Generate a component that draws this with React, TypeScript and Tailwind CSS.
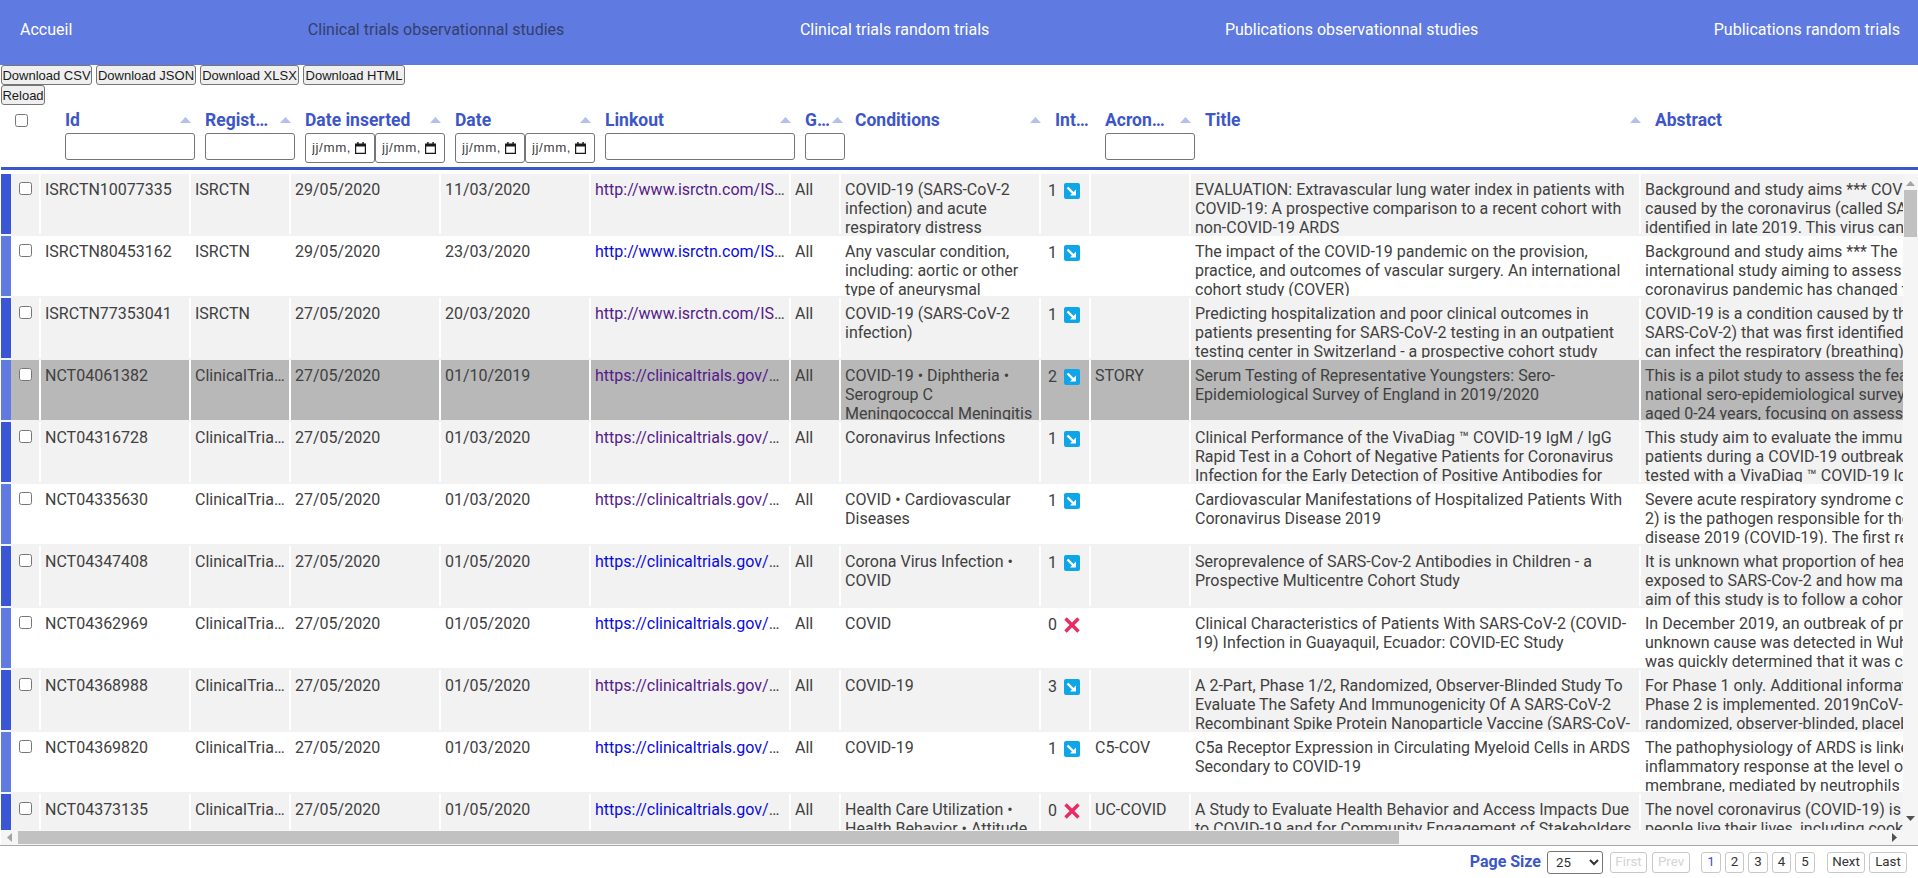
import React from "react";

type Row = {
  id: string; reg: string; ins: string; date: string; link: string; visited: boolean;
  cond: string; n: number; acr: string; title: string; abs: string[];
};

const CT = "ClinicalTrials.gov";
const rows: Row[] = [
  { id: "ISRCTN10077335", reg: "ISRCTN", ins: "29/05/2020", date: "11/03/2020", link: "http://www.isrctn.com/ISRCTN10077335", visited: true, cond: "COVID-19 (SARS-CoV-2 infection) and acute respiratory distress syndrome", n: 1, acr: "", title: "EVALUATION: Extravascular lung water index in patients with COVID-19: A prospective comparison to a recent cohort with non-COVID-19 ARDS", abs: ["Background and study aims *** COVID-19 is a", "caused by the coronavirus (called SARS-CoV-2)", "identified in late 2019. This virus can infect"] },
  { id: "ISRCTN80453162", reg: "ISRCTN", ins: "29/05/2020", date: "23/03/2020", link: "http://www.isrctn.com/ISRCTN80453162", visited: false, cond: "Any vascular condition, including: aortic or other type of aneurysmal disease", n: 1, acr: "", title: "The impact of the COVID-19 pandemic on the provision, practice, and outcomes of vascular surgery. An international cohort study (COVER)", abs: ["Background and study aims *** The", "international study aiming to assess how the", "coronavirus pandemic has changed the"] },
  { id: "ISRCTN77353041", reg: "ISRCTN", ins: "27/05/2020", date: "20/03/2020", link: "http://www.isrctn.com/ISRCTN77353041", visited: true, cond: "COVID-19 (SARS-CoV-2 infection)", n: 1, acr: "", title: "Predicting hospitalization and poor clinical outcomes in patients presenting for SARS-CoV-2 testing in an outpatient testing center in Switzerland - a prospective cohort study", abs: ["COVID-19 is a condition caused by the", "SARS-CoV-2) that was first identified", "can infect the respiratory (breathing) system"] },
  { id: "NCT04061382", reg: CT, ins: "27/05/2020", date: "01/10/2019", link: "https://clinicaltrials.gov/show/NCT04061382", visited: true, cond: "COVID-19 • Diphtheria • Serogroup C Meningococcal Meningitis", n: 2, acr: "STORY", title: "Serum Testing of Representative Youngsters: Sero-Epidemiological Survey of England in 2019/2020", abs: ["This is a pilot study to assess the feasibility", "national sero-epidemiological survey", "aged 0-24 years, focusing on assessing"] },
  { id: "NCT04316728", reg: CT, ins: "27/05/2020", date: "01/03/2020", link: "https://clinicaltrials.gov/show/NCT04316728", visited: true, cond: "Coronavirus Infections", n: 1, acr: "", title: "Clinical Performance of the VivaDiag ™ COVID-19 IgM / IgG Rapid Test in a Cohort of Negative Patients for Coronavirus Infection for the Early Detection of Positive Antibodies for COVID-19", abs: ["This study aim to evaluate the immunity", "patients during a COVID-19 outbreak", "tested with a VivaDiag ™ COVID-19 IgM"] },
  { id: "NCT04335630", reg: CT, ins: "27/05/2020", date: "01/03/2020", link: "https://clinicaltrials.gov/show/NCT04335630", visited: true, cond: "COVID • Cardiovascular Diseases", n: 1, acr: "", title: "Cardiovascular Manifestations of Hospitalized Patients With Coronavirus Disease 2019", abs: ["Severe acute respiratory syndrome coronavirus", "2) is the pathogen responsible for the", "disease 2019 (COVID-19). The first reports"] },
  { id: "NCT04347408", reg: CT, ins: "27/05/2020", date: "01/05/2020", link: "https://clinicaltrials.gov/show/NCT04347408", visited: false, cond: "Corona Virus Infection • COVID", n: 1, acr: "", title: "Seroprevalence of SARS-Cov-2 Antibodies in Children - a Prospective Multicentre Cohort Study", abs: ["It is unknown what proportion of healthy", "exposed to SARS-Cov-2 and how many", "aim of this study is to follow a cohort"] },
  { id: "NCT04362969", reg: CT, ins: "27/05/2020", date: "01/05/2020", link: "https://clinicaltrials.gov/show/NCT04362969", visited: false, cond: "COVID", n: 0, acr: "", title: "Clinical Characteristics of Patients With SARS-CoV-2 (COVID-19) Infection in Guayaquil, Ecuador: COVID-EC Study", abs: ["In December 2019, an outbreak of pneumonia", "unknown cause was detected in Wuhan", "was quickly determined that it was caused"] },
  { id: "NCT04368988", reg: CT, ins: "27/05/2020", date: "01/05/2020", link: "https://clinicaltrials.gov/show/NCT04368988", visited: true, cond: "COVID-19", n: 3, acr: "", title: "A 2-Part, Phase 1/2, Randomized, Observer-Blinded Study To Evaluate The Safety And Immunogenicity Of A SARS-CoV-2 Recombinant Spike Protein Nanoparticle Vaccine (SARS-CoV-2 rS) With or Without MatrixM Adjuvant", abs: ["For Phase 1 only. Additional information", "Phase 2 is implemented. 2019nCoV-", "randomized, observer-blinded, placebo"] },
  { id: "NCT04369820", reg: CT, ins: "27/05/2020", date: "01/03/2020", link: "https://clinicaltrials.gov/show/NCT04369820", visited: false, cond: "COVID-19", n: 1, acr: "C5-COV", title: "C5a Receptor Expression in Circulating Myeloid Cells in ARDS Secondary to COVID-19", abs: ["The pathophysiology of ARDS is linked", "inflammatory response at the level of", "membrane, mediated by neutrophils and"] },
  { id: "NCT04373135", reg: CT, ins: "27/05/2020", date: "01/05/2020", link: "https://clinicaltrials.gov/show/NCT04373135", visited: false, cond: "Health Care Utilization • Health Behavior • Attitude", n: 0, acr: "UC-COVID", title: "A Study to Evaluate Health Behavior and Access Impacts Due to COVID-19 and for Community Engagement of Stakeholders", abs: ["The novel coronavirus (COVID-19) is", "people live their lives, including cooking", "and working"] },
];

function SortUp() {
  return (
    <svg width="11" height="6" viewBox="0 0 11 6" className="shrink-0">
      <path d="M5.5 0 L11 6 L0 6 Z" fill="#b3bfec" />
    </svg>
  );
}

function Trend() {
  return (
    <svg width="16" height="16" viewBox="0 0 16 16" className="shrink-0">
      <rect width="16" height="16" rx="2" fill="#0fa5e9" />
      <path d="M3.5 4.5 L9.5 10.5" stroke="#fff" strokeWidth="2.4" />
      <path d="M12 6.5 L12 12.5 L6 12.5 Z" fill="#fff" />
    </svg>
  );
}

function Cross() {
  return (
    <svg width="16" height="16" viewBox="0 0 16 16" className="shrink-0">
      <path d="M1.5 1.5 L14.5 14.5 M14.5 1.5 L1.5 14.5" stroke="#ea2a62" strokeWidth="3.4" />
    </svg>
  );
}

function Calendar() {
  return (
    <svg width="11" height="12" viewBox="0 0 11 12" className="shrink-0">
      <path d="M0 1.5 H11 V12 H0 Z M1.2 4.5 V10.8 H9.8 V4.5 Z" fill="#1a1a1a" fillRule="evenodd" />
      <rect x="2.2" y="0" width="1.4" height="2" fill="#1a1a1a" />
      <rect x="7.4" y="0" width="1.4" height="2" fill="#1a1a1a" />
    </svg>
  );
}

function DateBox() {
  return (
    <div className="flex h-[30px] w-[70px] shrink-0 items-center justify-between rounded-[3px] border border-[#767676] bg-white pl-[6px] pr-[8px] text-[13.33px] tracking-[0.6px] text-[#3f3f3f] [font-family:Liberation_Sans,Arial,sans-serif]">
      <span className="overflow-hidden whitespace-nowrap">jj/mm,</span>
      <Calendar />
    </div>
  );
}

function TextBox({ cls }: { cls: string }) {
  return <input type="text" className={"h-[27px] rounded-[3px] border border-[#767676] bg-white " + cls} />;
}

function HeadCell({ label, cls, arrow = true, children }: { label: string; cls: string; arrow?: boolean; children?: React.ReactNode }) {
  return (
    <div className={"shrink-0 pl-[5px] pr-[9px] " + cls}>
      <div className="flex h-[28px] items-center justify-between gap-[2px] pt-[2px]">
        <span className="whitespace-nowrap text-[17.5px] font-bold leading-[19px] text-[#3c55c8]">{label}</span>
        {arrow && <SortUp />}
      </div>
      {children}
    </div>
  );
}

function Btn({ children, cls = "", muted = false }: { children: React.ReactNode; cls?: string; muted?: boolean }) {
  return (
    <button className={"flex h-[21px] items-center justify-center rounded-[3px] border border-[#c8c8c8] bg-white text-[13.33px] " + (muted ? "text-[#d4d4d4] " : "text-[#333] ") + cls}>
      {children}
    </button>
  );
}

function TopBtn({ children, cls }: { children: React.ReactNode; cls: string }) {
  return (
    <button className={"flex h-[20px] items-center justify-center whitespace-nowrap rounded-[3px] border border-[#767676] bg-[#efefef] pt-px text-[13px] text-[#1a1a1a] [font-family:Liberation_Sans,Arial,sans-serif] " + cls}>
      {children}
    </button>
  );
}

function DataRow({ r, i }: { r: Row; i: number }) {
  const odd = i % 2 === 0;
  const selected = i === 3;
  const bg = selected ? "bg-[#b8b8b8]" : odd ? "bg-[#f2f2f2]" : "bg-white";
  const cell = "h-[60px] shrink-0 overflow-hidden border-r-2 border-white px-[4px] pt-[6px] leading-[19px] " + bg;
  return (
    <div className={"mb-[2px] flex h-[60px] w-max " + (odd ? "shadow-[0_-2px_0_#f2f2f2,0_2px_0_#f2f2f2]" : "")}>
      <div className={"h-[60px] w-[10px] shrink-0 " + (odd ? "bg-[#3a56d4]" : "bg-[#5f7ae0]")} />
      <div className={"h-[60px] w-[30px] shrink-0 border-r-2 border-white pl-[8px] pt-[8px] " + bg}>
        <input type="checkbox" className="block h-[13px] w-[13px]" />
      </div>
      <div className={cell + " w-[150px]"}>{r.id}</div>
      <div className={cell + " w-[100px] truncate"}>{r.reg}</div>
      <div className={cell + " w-[150px]"}>{r.ins}</div>
      <div className={cell + " w-[150px]"}>{r.date}</div>
      <div className={cell + " w-[200px] truncate"}>
        <a href="#" className={r.visited ? "text-[#551a8b]" : "text-[#0a0ae0]"}>{r.link}</a>
      </div>
      <div className={cell + " w-[50px]"}>All</div>
      <div className={cell + " w-[200px]"}>{r.cond}</div>
      <div className={"h-[60px] w-[50px] shrink-0 border-r-2 border-white pl-[7px] pt-[9px] " + bg}>
        <div className="flex h-[16px] items-center gap-[7px] leading-[16px]">
          <span className="w-[9px]">{r.n}</span>
          {r.n > 0 ? <Trend /> : <Cross />}
        </div>
      </div>
      <div className={cell + " w-[100px]"}>{r.acr}</div>
      <div className={cell + " w-[450px]"}>{r.title}</div>
      <div className={cell + " w-[500px] whitespace-nowrap"}>
        {r.abs.map((l) => (
          <div key={l}>{l}</div>
        ))}
      </div>
    </div>
  );
}

export default function App() {
  return (
    <div className="flex h-[878px] w-[1918px] flex-col overflow-hidden bg-white text-[16px] text-[#404040] [font-family:Roboto,sans-serif]">
      <nav className="flex h-[65px] shrink-0 items-center justify-between bg-[#5f7ae0] pb-[5px] pl-[20px] pr-[18px] text-white">
        <a>Accueil</a>
        <a className="text-[#333f6e]">Clinical trials observationnal studies</a>
        <a>Clinical trials random trials</a>
        <a>Publications observationnal studies</a>
        <a>Publications random trials</a>
      </nav>

      <div className="flex h-[20px] shrink-0 gap-[4px] pl-px">
        <TopBtn cls="w-[91px]">Download CSV</TopBtn>
        <TopBtn cls="w-[100px]">Download JSON</TopBtn>
        <TopBtn cls="w-[99px]">Download XLSX</TopBtn>
        <TopBtn cls="w-[102px]">Download HTML</TopBtn>
      </div>
      <div className="flex h-[20px] shrink-0 pl-px">
        <TopBtn cls="w-[44px]">Reload</TopBtn>
      </div>

      <div className="flex h-[62px] shrink-0 overflow-hidden">
        <div className="w-[60px] shrink-0 pl-[15px] pt-[9px]">
          <input type="checkbox" className="block h-[13px] w-[13px]" />
        </div>
        <HeadCell label="Id" cls="w-[140px]"><TextBox cls="w-[130px]" /></HeadCell>
        <HeadCell label="Regist…" cls="w-[100px]"><TextBox cls="w-[90px]" /></HeadCell>
        <HeadCell label="Date inserted" cls="w-[150px]">
          <div className="flex"><DateBox /><DateBox /></div>
        </HeadCell>
        <HeadCell label="Date" cls="w-[150px]">
          <div className="flex"><DateBox /><DateBox /></div>
        </HeadCell>
        <HeadCell label="Linkout" cls="w-[200px]"><TextBox cls="w-[190px]" /></HeadCell>
        <HeadCell label="G…" cls="w-[50px]"><TextBox cls="w-[40px]" /></HeadCell>
        <HeadCell label="Conditions" cls="w-[200px]" />
        <HeadCell label="Int…" cls="w-[50px]" arrow={false} />
        <HeadCell label="Acron…" cls="w-[100px]"><TextBox cls="w-[90px]" /></HeadCell>
        <HeadCell label="Title" cls="w-[450px]" />
        <HeadCell label="Abstract" cls="w-[268px]" arrow={false} />
      </div>

      <div className="ml-px h-[3px] shrink-0 bg-[#3b57c8]" />

      <div className="mt-[4px] flex h-[656px] shrink-0">
        <div className="ml-px w-[1902px] shrink-0 overflow-hidden">
          {rows.map((r, i) => (
            <DataRow key={r.id} r={r} i={i} />
          ))}
        </div>
        <div className="flex w-[15px] shrink-0 flex-col items-center bg-[#f5f5f5] pt-[7px]">
          <svg width="9" height="5" viewBox="0 0 9 5"><path d="M4.5 0 L9 5 L0 5 Z" fill="#a3a3a3" /></svg>
          <div className="mt-[4px] h-[47px] w-[13px] bg-[#c1c1c1]" />
          <div className="flex-1" />
          <svg className="mb-[9px]" width="9" height="5" viewBox="0 0 9 5"><path d="M0 0 L9 0 L4.5 5 Z" fill="#505050" /></svg>
        </div>
      </div>

      <div className="ml-px flex h-[15px] shrink-0 items-center bg-[#f5f5f5]">
        <div className="flex w-[17px] shrink-0 justify-center">
          <svg width="5" height="9" viewBox="0 0 5 9"><path d="M5 0 L5 9 L0 4.5 Z" fill="#a3a3a3" /></svg>
        </div>
        <div className="h-[13px] w-[1381px] shrink-0 bg-[#c1c1c1]" />
        <div className="flex-1" />
        <div className="flex w-[27px] shrink-0 justify-start pl-[1px]">
          <svg width="5" height="9" viewBox="0 0 5 9"><path d="M0 0 L5 4.5 L0 9 Z" fill="#505050" /></svg>
        </div>
      </div>
      <div className="h-px shrink-0 bg-[#a8a8a8]" />

      <div className="flex flex-1 items-center justify-end pr-[11px]">
        <span className="mr-[6px] text-[16px] font-bold text-[#3c55c8]">Page Size</span>
        <select defaultValue="25" className="mr-[7px] h-[23px] w-[56px] rounded-[3px] border border-[#767676] bg-white pl-[4px] text-[13.33px] text-[#333]">
          <option>25</option>
        </select>
        <Btn muted cls="mr-[5px] w-[37px]">First</Btn>
        <Btn muted cls="mr-[11px] w-[38px]">Prev</Btn>
        <Btn cls="mr-[4px] w-[20px] !text-[#3c55c8]">1</Btn>
        <Btn cls="mr-[4px] w-[19px]">2</Btn>
        <Btn cls="mr-[4px] w-[20px]">3</Btn>
        <Btn cls="mr-[4px] w-[19px]">4</Btn>
        <Btn cls="mr-[12px] w-[20px]">5</Btn>
        <Btn cls="mr-[4px] w-[38px]">Next</Btn>
        <Btn cls="w-[38px]">Last</Btn>
      </div>
    </div>
  );
}
